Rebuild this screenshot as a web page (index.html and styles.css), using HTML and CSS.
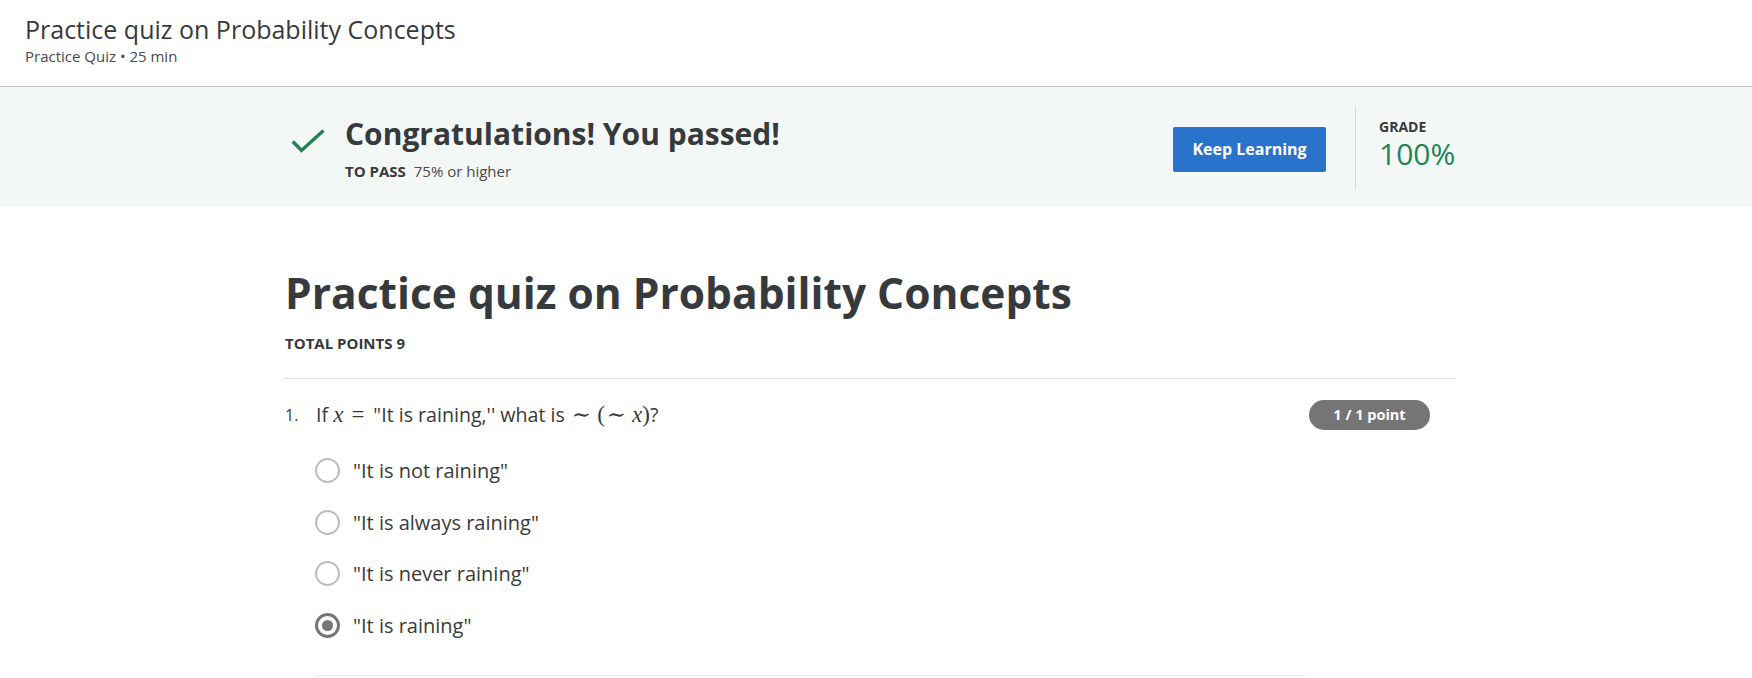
FILE: index.html
```html
<!DOCTYPE html>
<html lang="en">
<head>
<meta charset="utf-8">
<title>Practice quiz on Probability Concepts</title>
<link rel="stylesheet" href="styles.css">
</head>
<body>
<header class="top">
  <div class="top-title">Practice quiz on Probability Concepts</div>
  <div class="top-meta">Practice Quiz • 25 min</div>
</header>

<section class="banner">
  <div class="wrap banner-inner">
    <div class="pass">
      <svg class="check" width="34" height="26" viewBox="0 0 34 26" aria-hidden="true">
        <polyline points="1.8,12.5 10.5,21.5 32.5,1.5" fill="none" stroke="#1f8354" stroke-width="3.4"/>
      </svg>
      <div class="pass-text">
        <h2 class="pass-title">Congratulations! You passed!</h2>
        <p class="pass-req"><b>TO PASS</b> 75% or higher</p>
      </div>
    </div>
    <button class="btn-primary">Keep Learning</button>
    <div class="grade">
      <div class="grade-label">GRADE</div>
      <div class="grade-value">100%</div>
    </div>
  </div>
</section>

<div class="page">
  <main class="wrap">
    <h1 class="quiz-title">Practice quiz on Probability Concepts</h1>
    <div class="total">TOTAL POINTS 9</div>
    <div class="question">
      <div class="q-head">
        <span class="q-num">1.</span>
        <div class="q-text">If <span class="m"><i>x</i><span class="rel">=</span></span>"It is raining,'' what is <span class="m"><span class="tl">∼</span><span class="par">(</span><span class="tl">∼</span><i>x</i><span class="par">)</span></span>?</div>
        <span class="badge">1 / 1 point</span>
      </div>
      <ul class="options">
        <li class="option"><span class="radio"></span><span>"It is not raining"</span></li>
        <li class="option"><span class="radio"></span><span>"It is always raining"</span></li>
        <li class="option"><span class="radio"></span><span>"It is never raining"</span></li>
        <li class="option"><span class="radio checked"></span><span>"It is raining"</span></li>
      </ul>
      <div class="q-sep"></div>
    </div>
  </main>
</div>
</body>
</html>
```

FILE: styles.css
```css
* { box-sizing: border-box; }
html, body { margin: 0; padding: 0; }
body {
  font-family: "Open Sans", "Noto Sans", sans-serif;
  color: #373a3c;
  background: #fff;
  overflow: hidden;
}

.top {
  height: 87px;
  border-bottom: 1px solid #c4c4c4;
  padding: 14px 0 0 25px;
}
.top-title {
  font-size: 25px;
  line-height: 30px;
  color: #373a3c;
}
.top-meta {
  font-size: 15px;
  line-height: 20px;
  margin-top: 2px;
  color: #4a4a4a;
}

.banner {
  background: #f3f8f7;
  height: 120px;
  padding-right: 12px;
}
.wrap {
  max-width: 1170px;
  margin: 0 auto;
}
.banner-inner {
  height: 100%;
  display: flex;
  align-items: center;
}
.pass {
  display: flex;
  align-items: flex-start;
  padding-left: 6px;
  margin-top: 2px;
}
.check {
  margin-top: 14px;
  flex: none;
}
.pass-text { margin-left: 20px; }
.pass-title {
  margin: 0;
  font-size: 30px;
  line-height: 38px;
  font-weight: 700;
  color: #373a3c;
}
.pass-req {
  margin: 8px 0 0;
  font-size: 15px;
  line-height: 20px;
  color: #4a4a4a;
}
.pass-req b {
  color: #373a3c;
  margin-right: 4px;
}
.btn-primary {
  margin-left: auto;
  margin-top: 4px;
  width: 153px;
  height: 45px;
  border: 0;
  border-radius: 2px;
  background: #2a73cc;
  color: #fff;
  font-family: inherit;
  font-size: 16px;
  font-weight: 700;
  padding: 0;
}
.grade {
  margin-left: 29px;
  margin-top: 2px;
  border-left: 1px solid #dcdcdc;
  height: 84px;
  padding: 11px 0 0 23px;
  width: 100px;
}
.grade-label {
  font-size: 14px;
  line-height: 20px;
  font-weight: 700;
  color: #373a3c;
}
.grade-value {
  font-size: 30px;
  line-height: 34px;
  color: #1f8354;
}

.page { padding-right: 12px; }
.quiz-title {
  margin: 58px 0 0;
  font-size: 42.5px;
  line-height: 56px;
  font-weight: 700;
  color: #373a3c;
}
.total {
  margin-top: 12px;
  font-size: 15px;
  line-height: 20px;
  font-weight: 700;
  color: #373a3c;
}
.question {
  border-top: 1px solid #dedede;
  margin-top: 25px;
  padding-top: 21px;
}
.q-head {
  display: flex;
  align-items: flex-start;
  padding-right: 25px;
}
.q-num {
  width: 31px;
  flex: none;
  font-size: 16px;
  line-height: 30px;
}
.q-text {
  flex: 1;
  font-size: 19.6px;
  line-height: 30px;
}
.m { font-family: "Liberation Serif", "DejaVu Serif", serif; font-size: 23px; }
.m i { font-style: italic; }
.rel { margin: 0 9px 0 8px; }
.tl { margin: 0 6px 0 2px; }
.badge {
  flex: none;
  width: 121px;
  height: 30px;
  border-radius: 15px;
  background: #757575;
  color: #fff;
  font-size: 14.5px;
  font-weight: 700;
  line-height: 30px;
  text-align: center;
}
.options {
  list-style: none;
  margin: 15px 0 0 30px;
  padding: 0;
}
.option {
  display: flex;
  align-items: center;
  height: 51.5px;
  font-size: 20px;
  color: #373a3c;
}
.radio {
  width: 25px;
  height: 25px;
  border-radius: 50%;
  border: 2px solid #bdbdbd;
  margin-right: 13px;
  flex: none;
  display: flex;
  align-items: center;
  justify-content: center;
}
.radio.checked {
  border: 3px solid #757575;
}
.radio.checked::after {
  content: "";
  width: 11px;
  height: 11px;
  border-radius: 50%;
  background: #757575;
}
.q-sep {
  margin: 24px 0 0 30px;
  width: 991px;
  border-top: 1px solid #eeeeee;
}
```
